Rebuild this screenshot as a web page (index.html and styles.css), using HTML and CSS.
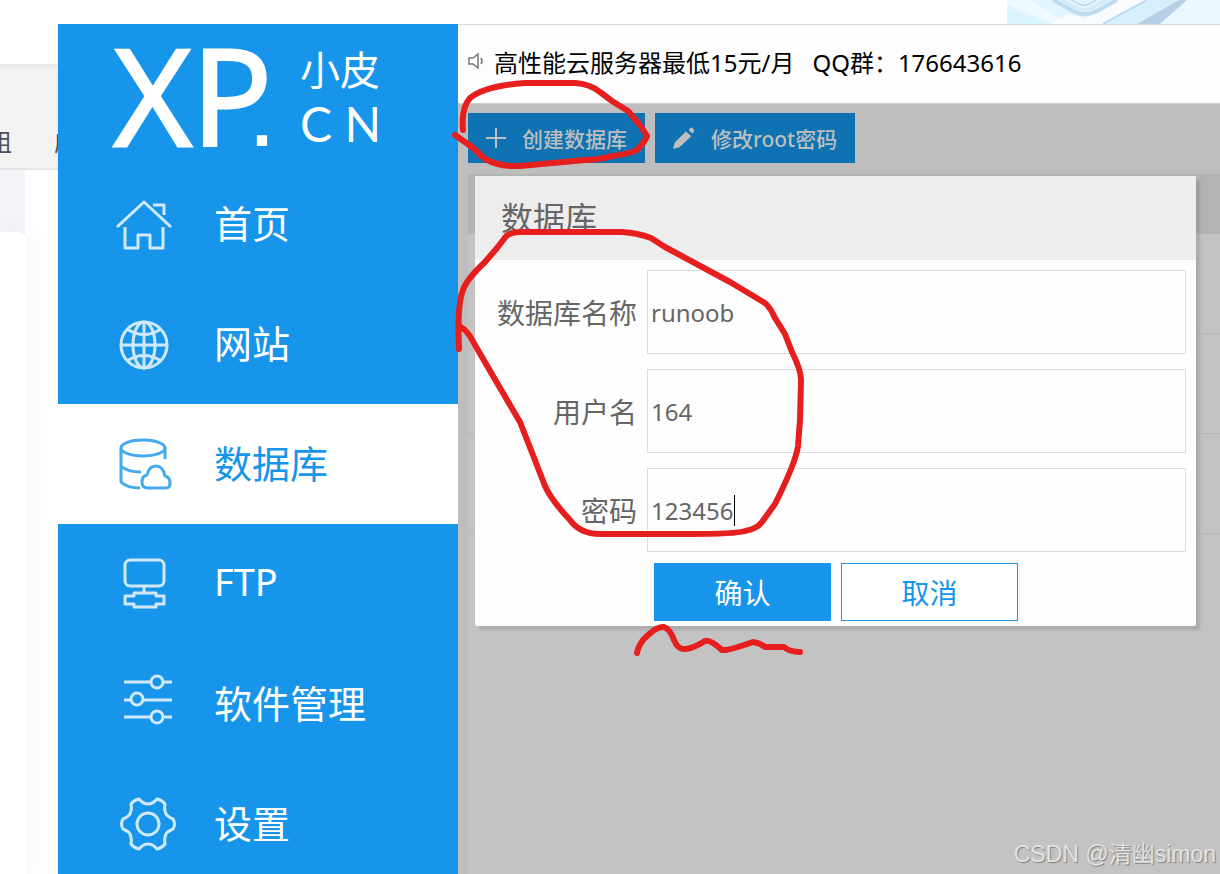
FILE: index.html
```html
<!DOCTYPE html>
<html lang="zh-CN">
  <head>
    <meta charset="UTF-8" />
    <meta name="viewport" content="width=device-width, initial-scale=1.0" />
    <title>小皮面板 - 数据库</title>
    <link rel="stylesheet" href="styles.css">
  </head>
  <body>
    <div class="desktop">
      <div class="strip">
        <svg class="banner" width="213" height="24" viewBox="0 0 213 24" aria-hidden="true">
          <rect width="213" height="24" fill="#e0f5fe" />
          <path d="M0 0H24L62 24H46L0 4Z" fill="#eefaff" />
          <path d="M0 8L38 24H0Z" fill="#d8f4fd" />
          <path d="M44 24L60 14L78 18L110 0H140L96 24Z" fill="#f8fcff" />
          <path d="M46 0L68 12Q78 17 90 11L110 0" fill="none" stroke="#bcdcf2" stroke-width="4" />
          <path d="M54 0L70 8Q78 12 87 7L99 0" fill="none" stroke="#d6ebf8" stroke-width="4" />
          <path d="M64 0L72 4Q78 7 84 3L89 0" fill="none" stroke="#a9c6e0" stroke-width="1" />
          <path d="M96 24L140 0" stroke="#b9dcf6" stroke-width="2" />
          <path d="M100 24L144 0H172L130 24Z" fill="#d6effc" />
          <path d="M130 24L172 0H180L153 24Z" fill="#b5cfe4" />
          <path d="M153 24L180 0H213V24Z" fill="#e9f8fe" />
        </svg>
      </div>
      <div class="windows">
        <div class="browser">
          <div class="browser-nav">
            <span>组</span>
            <span>应</span>
          </div>
          <div class="browser-body">
            <div class="browser-card"></div>
          </div>
        </div>
        <div class="app">
          <aside class="sidebar">
            <div class="logo">
              <span class="logo-xp">XP<span class="logo-dot">.</span></span>
              <span class="logo-side">
                <span class="logo-cn">小皮</span>
                <span class="logo-en">C N</span>
              </span>
            </div>
            <nav class="menu">
              <a class="menu-item" href="#home">
                <svg class="menu-icon" viewBox="0 0 60 60">
                  <path d="M3 33L30 8L57 33M39 11H50V21M11 33V54H24V41H36V54H49V33" />
                </svg>
                首页
              </a>
              <a class="menu-item" href="#site">
                <svg class="menu-icon" viewBox="0 0 60 60">
                  <circle cx="30" cy="31" r="23" />
                  <ellipse cx="30" cy="31" rx="11" ry="23" />
                  <path d="M30 8V54M7 31H53M13 15Q30 26 47 15M13 47Q30 36 47 47" />
                </svg>
                网站
              </a>
              <a class="menu-item active" href="#database">
                <svg class="menu-icon" viewBox="0 0 60 60">
                  <ellipse cx="29" cy="14" rx="22" ry="8" />
                  <path d="M7 14V48Q13 54 26 54M51 14V25M7 32Q13 38 27 38" />
                  <path d="M34 54Q28 54 28 48Q28 42 33 41Q35 32 42 32Q49 32 51 42Q56 43 56 49Q56 54 52 54Z" />
                </svg>
                数据库
              </a>
              <a class="menu-item" href="#ftp">
                <svg class="menu-icon" viewBox="0 0 60 60">
                  <rect x="11" y="6" width="39" height="26" rx="5" />
                  <path d="M30 32V39M20 39H42V42H50V50H42V53H20V50H11V42H20Z" />
                </svg>
                FTP
              </a>
              <a class="menu-item" href="#software">
                <svg class="menu-icon" viewBox="0 0 60 60">
                  <path d="M10 8H37M49 8H58M10 26H17M29 26H58M10 43H37M49 43H58" />
                  <circle cx="43" cy="8" r="6" />
                  <circle cx="23" cy="25" r="6" />
                  <circle cx="43" cy="43" r="6" />
                </svg>
                软件管理
              </a>
              <a class="menu-item" href="#settings">
                <svg class="menu-icon" viewBox="0 0 60 60">
                  <g transform="translate(34 30)">
                    <circle r="11" />
                    <path d="M25 5Q20 7 18 10Q16 14 17 20Q14 24 9 25Q5 20 0 20Q-5 20 -9 25Q-14 24 -17 20Q-16 14 -18 10Q-20 7 -25 5Q-28 0 -25 -5Q-20 -7 -18 -10Q-16 -14 -17 -20Q-14 -24 -9 -25Q-5 -20 0 -20Q5 -20 9 -25Q14 -24 17 -20Q16 -14 18 -10Q20 -7 25 -5Q28 0 25 5Z" />
                  </g>
                </svg>
                设置
              </a>
            </nav>
          </aside>
          <main class="main">
            <header class="notice">
              <svg class="speaker" width="16" height="18" viewBox="0 0 16 18">
                <path d="M1 6H5L10 2V16L5 12H1ZM13 6Q15 9 13 12" />
              </svg>
              <span>高性能云服务器最低15元/月</span>
              <span class="notice-qq">QQ群：176643616</span>
            </header>
            <div class="toolbar">
              <button type="button" class="tool">
                <svg width="20" height="20" viewBox="0 0 20 20">
                  <path d="M10 0V20M0 10H20" stroke="#bebebe" stroke-width="2" />
                </svg>
                创建数据库
              </button>
              <button type="button" class="tool">
                <svg width="22" height="24" viewBox="0 0 24 24" fill="#bebebe">
                  <path d="M0 24L2 17L14 5L20 10L7 22ZM17 3L19 1Q20 0 22 2Q24 4 23 5L21 7Z" />
                </svg>
                修改root密码
              </button>
            </div>
            <div class="grid">
              <div class="grid-head"></div>
              <div class="grid-row"></div>
              <div class="grid-row"></div>
              <div class="grid-row"></div>
            </div>
            <div class="dialog" role="dialog" aria-labelledby="dialogTitle">
              <h2 class="dialog-title" id="dialogTitle">数据库</h2>
              <form class="dialog-form">
                <label for="dbName">数据库名称</label>
                <div class="field">
                  <input type="text" id="dbName" name="dbName" value="runoob" />
                </div>
                <label for="dbUser">用户名</label>
                <div class="field">
                  <input type="text" id="dbUser" name="dbUser" value="164" />
                </div>
                <label for="dbPassword">密码</label>
                <div class="field">
                  <input type="text" id="dbPassword" name="dbPassword" value="123456" />
                  <span class="caret"></span>
                </div>
                <div class="dialog-buttons">
                  <button type="button" class="confirm">确认</button>
                  <button type="button" class="cancel">取消</button>
                </div>
              </form>
            </div>
          </main>
        </div>
      </div>
      <!-- Hand drawn marks -->
      <svg class="marks" width="1220" height="874" viewBox="0 0 1220 874" aria-hidden="true">
        <path d="M463 130Q461 108 470 98Q485 86 525 83H575Q590 84 600 92L612 101L628 111L640 125L647 136Q646 140 638 149Q634 153 612 156Q598 160 585 160L520 166Q500 167 485 159L472 147L455 135" />
        <path d="M459 349Q457 305 463 290Q466 280 485 262L497 248L504 239Q508 232 520 232H622Q638 233 651 238L665 247L730 282L765 303Q770 307 775 318L785 334L792 352Q801 370 801 380L800 420L798 446Q796 462 775 504L762 522Q757 529 745 531Q735 534 690 534H600Q580 534 570 520Q552 501 545 486L531 450L520 422L510 405L493 376L475 345Q468 331 461 327" />
        <path d="M637 653Q638 647 643 640Q656 626 664 627Q670 629 674 640Q678 650 685 649Q692 649 705 641Q710 639 722 650Q728 651 753 642Q760 643 765 647H784Q790 652 800 652" />
      </svg>
      <div class="watermark">CSDN @清幽simon</div>
    </div>
  </body>
</html>
```

FILE: styles.css
```css
* {
  box-sizing: border-box;
}
body {
  margin: 0;
  font-family: "Noto Sans", "Noto Sans CJK SC", sans-serif;
  background-color: #fff;
}
button,
input {
  font-family: inherit;
}
.desktop {
  position: relative;
  display: flex;
  flex-direction: column;
  height: 100vh;
  overflow: hidden;
}
.strip {
  display: flex;
  flex: none;
  justify-content: flex-end;
}
.banner {
  display: block;
}
.windows {
  display: flex;
  flex: 1;
  min-height: 0;
}
/* Page behind the panel window */
.browser {
  display: flex;
  flex-direction: column;
  flex: none;
  width: 58px;
  padding-top: 40px;
  overflow: hidden;
}
.browser-nav {
  display: flex;
  align-items: center;
  gap: 42px;
  height: 106px;
  margin-left: -12px;
  padding-top: 48px;
  border-bottom: 2px solid #e6e6e6;
  background: linear-gradient(#e9e9e9, #f3f3f3 8px);
  color: #4d4f5c;
  font-size: 24px;
}
.browser-body {
  flex: 1;
  padding-top: 62px;
  background: linear-gradient(90deg, #f4f5f8 25px, #fff 25px);
}
.browser-card {
  width: 26px;
  height: 100%;
  border-radius: 0 8px 0 0;
  background-color: #fff;
  box-shadow: 0 0 24px rgba(40, 60, 100, 0.08);
}
.app {
  display: flex;
  flex: 1;
  min-width: 0;
  overflow: hidden;
}
.sidebar {
  flex: none;
  width: 400px;
  background-color: #1695ea;
  color: #fff;
}
.logo {
  display: flex;
  align-items: center;
  gap: 28px;
  height: 140px;
  padding-left: 56px;
}
.logo-xp {
  font-family: "Open Sans", sans-serif;
  font-size: 134px;
  font-weight: 400;
  line-height: 138px;
  -webkit-text-stroke: 3px #fff;
}
.logo-dot {
  margin-left: -20px;
  font-family: "Liberation Sans", sans-serif;
  font-size: 72px;
  font-weight: 700;
  line-height: 1;
  -webkit-text-stroke: 0;
}
.logo-side {
  display: flex;
  flex-direction: column;
  padding-top: 12px;
}
.logo-cn {
  font-size: 40px;
  line-height: 48px;
}
.logo-en {
  font-family: Lato, sans-serif;
  font-size: 48px;
  line-height: 60px;
}
.menu-item {
  display: flex;
  align-items: center;
  gap: 40px;
  height: 120px;
  padding: 0 0 6px 56px;
  color: #fff;
  font-size: 38px;
  text-decoration: none;
}
.menu-item.active {
  background-color: #fff;
  color: #1695ea;
}
.menu-icon {
  width: 60px;
  height: 60px;
  margin-top: 6px;
  overflow: visible;
  fill: none;
  stroke: currentColor;
  stroke-width: 3;
  stroke-linejoin: round;
  opacity: 0.8;
}
.main {
  position: relative;
  display: flex;
  flex-direction: column;
  flex: 1;
  min-width: 0;
  background-color: #bebebe;
}
.notice {
  display: flex;
  align-items: center;
  height: 80px;
  padding: 0 10px 6px;
  border-top: 1px solid #d9d9d9;
  border-bottom: 1px solid #d0d0d0;
  background-color: #fdfdfd;
  color: #000;
  font-size: 24px;
  white-space: nowrap;
}
.speaker {
  margin-right: 10px;
  fill: none;
  stroke: #777;
  stroke-width: 1.5;
}
.notice-qq {
  margin-left: 18px;
}
.toolbar {
  display: flex;
  gap: 10px;
  padding: 9px 10px 11px;
}
.tool {
  display: flex;
  align-items: center;
  gap: 16px;
  height: 50px;
  padding: 0 18px;
  border: none;
  background-color: #0f73b3;
  color: #bebebe;
  font-size: 21px;
  font-weight: 500;
  cursor: pointer;
}
.grid {
  flex: 1;
  margin-left: 10px;
  background-color: #c3c3c3;
}
.grid-head {
  height: 60px;
  background-color: #b3b3b3;
}
.grid-row {
  height: 100px;
  border-bottom: 1px solid #b8b8b8;
}
.dialog {
  position: absolute;
  top: 152px;
  right: 24px;
  left: 17px;
  border-radius: 2px;
  background-color: #fdfdfd;
  box-shadow: 4px 4px 3px rgba(0, 0, 0, 0.12);
  color: #666;
}
.dialog-title {
  margin: 0;
  padding: 0 26px;
  background-color: #ededed;
  font-size: 32px;
  font-weight: 400;
  line-height: 84px;
}
.dialog-form {
  display: grid;
  grid-template-columns: 162px 1fr;
  align-items: center;
  gap: 15px 10px;
  padding: 10px 10px 5px 0;
}
.dialog-form label {
  font-size: 28px;
  text-align: right;
}
.field {
  position: relative;
}
.field input {
  display: block;
  width: 100%;
  height: 84px;
  padding: 0 3px;
  border: 1px solid #dcdcdc;
  background-color: #fdfdfd;
  color: #666;
  font-size: 24px;
  outline: none;
}
.caret {
  position: absolute;
  top: 27px;
  left: 87px;
  width: 1px;
  height: 31px;
  background-color: #000;
}
.dialog-buttons {
  display: flex;
  grid-column: 2;
  gap: 10px;
  margin-top: -4px;
  padding-left: 7px;
}
.dialog-buttons button {
  width: 177px;
  height: 58px;
  border: 1px solid #1695ea;
  font-size: 28px;
  cursor: pointer;
}
.confirm {
  background-color: #1695ea;
  color: #fff;
}
.cancel {
  background-color: #fff;
  color: #1695ea;
}
.marks {
  position: absolute;
  top: 0;
  left: 0;
  fill: none;
  stroke: #e61e1e;
  stroke-width: 6;
  stroke-linecap: round;
  stroke-linejoin: round;
  pointer-events: none;
}
.watermark {
  position: absolute;
  right: 4px;
  bottom: 4px;
  color: #e2e2e2;
  font-family: "Liberation Sans", "Noto Sans CJK SC", sans-serif;
  font-size: 23px;
  line-height: 32px;
  text-shadow: 1px 1px 1px #808080;
}
```
